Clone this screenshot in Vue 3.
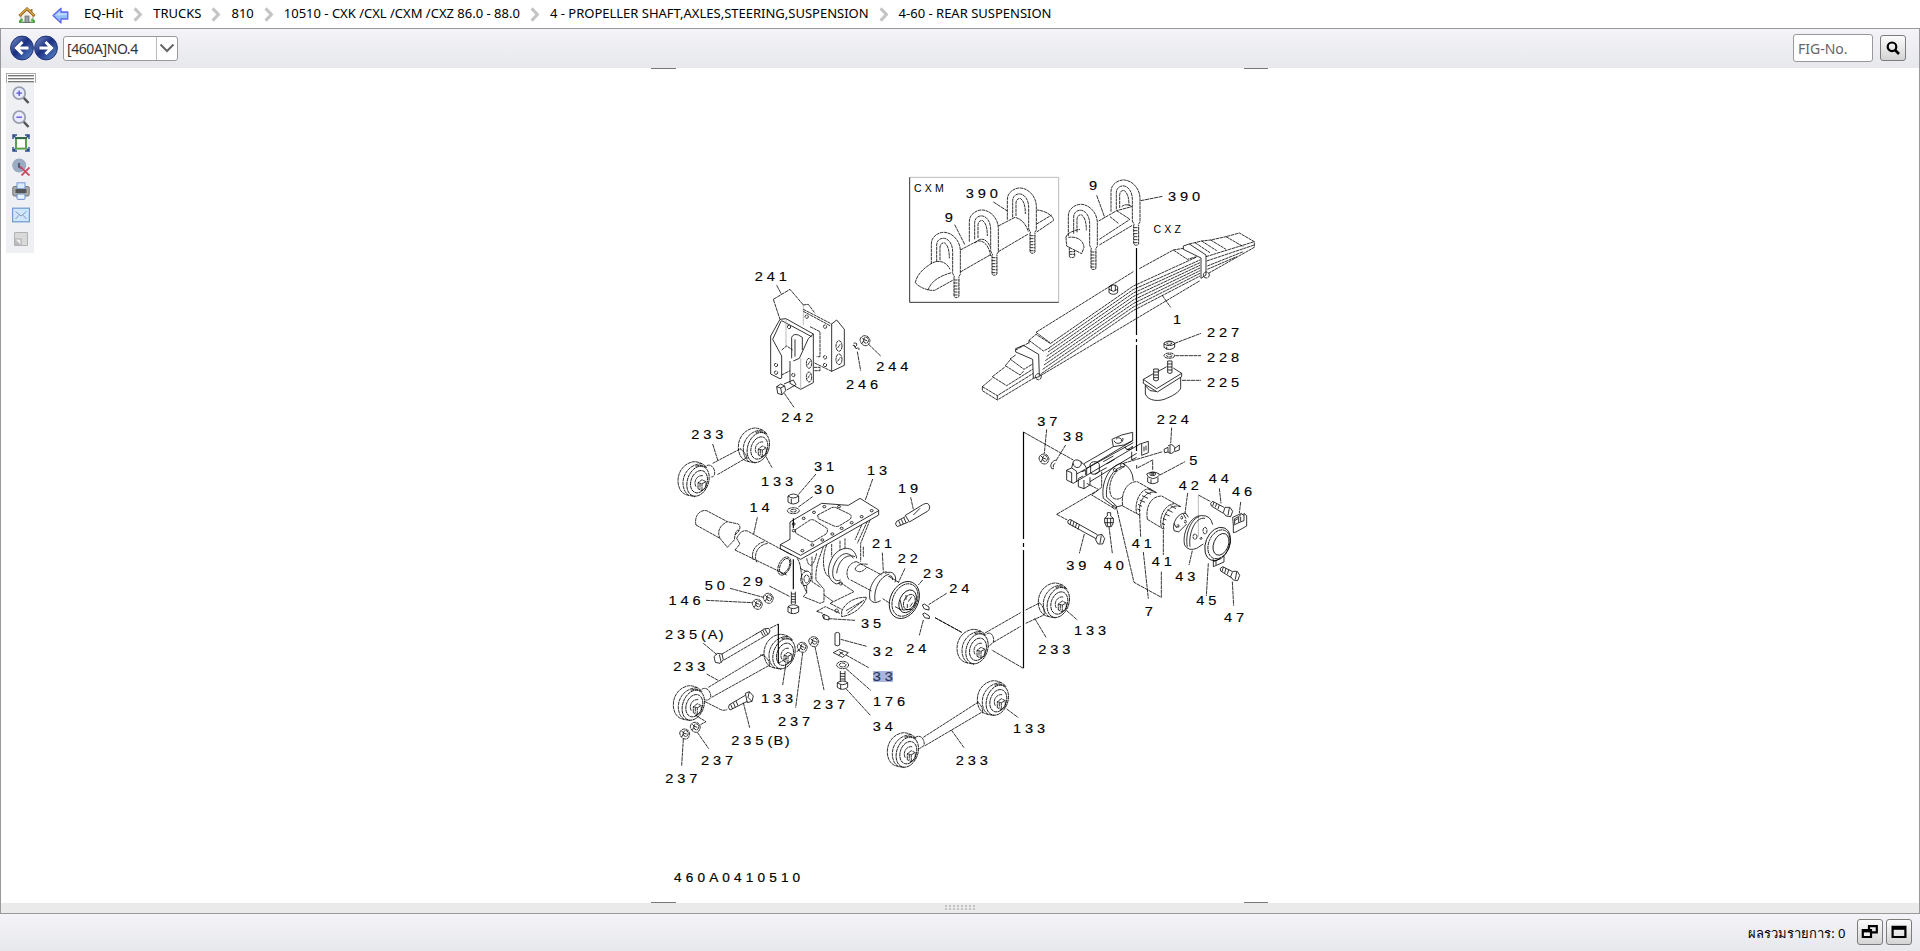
<script setup>
const crumbs = [
  'EQ-Hit',
  'TRUCKS',
  '810',
  '10510 - CXK /CXL /CXM /CXZ 86.0 - 88.0',
  '4 - PROPELLER SHAFT,AXLES,STEERING,SUSPENSION',
  '4-60 - REAR SUSPENSION',
]

// Part call-outs: text, left edge, baseline
const labels = [
  ['390', 965.7, 197.7], ['9', 944.7, 222], ['9', 1089, 190], ['390', 1168, 200.7],
  ['1', 1173, 323.7], ['227', 1207, 337.3], ['228', 1207, 362.3], ['225', 1207, 387.3],
  ['241', 754.7, 281], ['244', 876.3, 371.3], ['246', 846, 388.7], ['242', 781.3, 422],
  ['133', 761, 485.7], ['31', 814, 471.3], ['13', 867, 475], ['30', 814, 494],
  ['19', 898, 493], ['14', 749.5, 512], ['233', 691.3, 439], ['21', 872, 548.3],
  ['22', 897.7, 563.3], ['23', 923, 578], ['24', 949.3, 593], ['29', 742.7, 586],
  ['50', 704.7, 590], ['146', 668.5, 605.3], ['35', 861, 628],
  ['235', 665, 639.3], ['(', 701, 639.3], ['A', 707.8, 639.3], [')', 718.7, 639.3],
  ['24', 906.3, 653], ['32', 872.7, 656], ['176', 873, 705.7], ['34', 872.7, 730.7],
  ['233', 673.3, 670.7], ['133', 761, 702.7], ['237', 813, 708.7], ['237', 778, 725.7],
  ['235', 731.3, 745], ['(', 767.6, 745], ['B', 773.6, 745], [')', 784.7, 745],
  ['237', 701, 765.3], ['237', 665.3, 782.7],
  ['37', 1037.3, 425.7], ['38', 1063, 440.7], ['224', 1156.7, 424], ['5', 1189.3, 464.7],
  ['42', 1178.7, 489.7], ['44', 1208.7, 482.7], ['46', 1232, 496.3], ['39', 1066.3, 570],
  ['40', 1103.7, 570], ['41', 1131.7, 547.7], ['41', 1151.7, 566], ['43', 1175.3, 581.3],
  ['7', 1144.7, 616], ['45', 1196.3, 604.7], ['47', 1224, 622],
  ['133', 1074, 634.7], ['233', 1038.3, 654], ['133', 1013, 733], ['233', 955.7, 765],
]

const ubolts = [[94, 217], [208, 150], [322, 84], [505, 133], [633, 60]]
const eyes = [
  [678, 461.7], [738.3, 428], [764, 634.3], [673.3, 685.7],
  [957, 629.3], [1038.3, 583], [977.3, 680.7], [887.3, 732.7],
]
const nuts = [
  [757.3, 604.3], [768.3, 598.3], [802.3, 647.3], [813.7, 641.7],
  [695.3, 727.3], [684.7, 734], [865, 340.7], [1044, 459],
]
const plateHoles = [
  [461, 372], [461, 392], [491, 355], [522, 337], [553, 320], [597, 320], [695, 332],
  [665, 350], [635, 368], [605, 385], [577, 402], [547, 420], [517, 435], [487, 452],
]
const leaves = [0, 1, 2, 3, 4, 5, 6, 7].map(
  (i) => `M${452 - i * 4} ${550 + i * 13}L700 ${378 + i * 10.5}L${i ? 900 : 888} ${292 + i * 8}`
)
</script>

<template>
  <div class="page">
    <nav class="crumbs">
      <svg class="home" width="18" height="17" viewBox="0 0 18 17">
        <rect x="1" y="13" width="16" height="3" rx="1" fill="#3f9b3c" />
        <path d="M3 8L9 3L15 8V15H3Z" fill="#f3efe6" stroke="#8d8c86" stroke-width=".8" />
        <path d="M12.5 2h2v4h-2z" fill="#a87b46" />
        <path d="M1.3 9L9 1.8L16.7 9" fill="none" stroke="#8a5a17" stroke-width="2.6" />
        <path d="M1.6 8.4L9 1.6L16.4 8.4" fill="none" stroke="#e0a94c" stroke-width="1.3" />
        <rect x="7" y="9" width="4" height="6.5" fill="#9aa0a4" stroke="#5e6468" stroke-width=".7" />
        <circle cx="3.5" cy="13" r="1.5" fill="#4db848" /><circle cx="14.5" cy="13" r="1.5" fill="#4db848" />
      </svg>
      <svg class="back" width="17" height="17" viewBox="0 0 17 17">
        <path d="M1 8.5L9 1.2V5H15.8V12H9V16Z" fill="#93bffa" stroke="#6165ee" stroke-width="1.3" stroke-linejoin="round" />
        <path d="M3.5 8.4L8 4.4V6.4H14.5V8Z" fill="#c6dfff" />
      </svg>
      <template v-for="(c, i) in crumbs" :key="c">
        <svg v-if="i" class="sep" width="10" height="15" viewBox="0 0 10 15">
          <path d="M1.6 1.4L7.4 7.5L1.6 13.6" fill="none" stroke="#c4c4c4" stroke-width="3" />
        </svg>
        <span class="crumb">{{ c }}</span>
      </template>
    </nav>

    <section class="frame">
      <header class="bar">
        <svg class="round" width="24" height="26" viewBox="0 0 24 26">
          <defs>
            <linearGradient id="ball" x1="0" y1="0" x2="1" y2="1">
              <stop offset="0" stop-color="#7f9bd0" /><stop offset=".45" stop-color="#1c2f80" /><stop offset="1" stop-color="#5f8fd2" />
            </linearGradient>
          </defs>
          <ellipse cx="12" cy="13" rx="11.4" ry="11.9" fill="url(#ball)" stroke="#1d3277" />
          <path d="M18.5 13H7M12.5 7L6.5 13L12.5 19" fill="none" stroke="#fff" stroke-width="3" />
        </svg>
        <svg class="round" width="24" height="26" viewBox="0 0 24 26">
          <ellipse cx="12" cy="13" rx="11.4" ry="11.9" fill="url(#ball)" stroke="#1d3277" />
          <path d="M5.5 13H17M11.5 7L17.5 13L11.5 19" fill="none" stroke="#fff" stroke-width="3" />
        </svg>
        <div class="combo">
          <span class="combo-text">[460A]NO.4</span>
          <span class="combo-btn">
            <svg width="16" height="10" viewBox="0 0 16 10"><path d="M1.5 1.5L8 8L14.5 1.5" fill="none" stroke="#666" stroke-width="2" /></svg>
          </span>
        </div>
        <div class="fig">FIG-No.</div>
        <div class="btn search">
          <svg width="14" height="14" viewBox="0 0 14 14"><circle cx="6" cy="5.8" r="4.3" fill="none" stroke="#000" stroke-width="2.2" /><path d="M9 9L13 13" stroke="#000" stroke-width="2.6" /></svg>
        </div>
      </header>

      <div class="canvas">
        <svg class="drawing" width="1918" height="835" viewBox="1 68 1918 835">
          <defs>
            <g id="eye">
              <path d="M28 5C24 1 19 0 16 0C7 1 0 9 0 19C0 26 3 31 8 33L17 35" />
              <path d="M24 2C13 2 5 11 5 21C5 27 7 31 11 34M29 6C24 3 20 3 17 5" />
              <ellipse cx="20" cy="19.5" rx="10.5" ry="15.5" transform="rotate(20 20 19.5)" />
              <ellipse cx="21" cy="20" rx="8" ry="11.5" transform="rotate(20 21 20)" />
              <path d="M18 25C15 20 19 13 25 14M20 27V21L24 18L28 20V26L24 29ZM24 29V22M20 21L24 22L28 20M22 22V27" />
            </g>
            <g id="ubolt">
              <path d="M0 95V35C0 12 22 -1 40 0C66 2 87 28 87 55V126L81 135M16 88V38C16 24 28 16 40 18C55 22 64 38 64 58V123L70 135M26 84V44C27 34 34 30 40 32C52 40 54 60 54 78" />
              <path class="solid" d="M68 135V192Q75 200 83 192V135M68 143h14M68 152h14M68 161h14M68 170h14M68 179h14M68 188h14" />
            </g>
            <g id="nut">
              <path class="solid" d="M-5 -1Q-4 -5 0 -5Q4 -5 5 0Q4 5 1 5Q-4 5 -5 -1ZM-3 3L-1 -1L-3 -3M-1 -1L2 0" />
              <ellipse class="solid" cx="1" cy="-.5" rx="2.5" ry="3" />
            </g>
          </defs>

          <!-- sheet trim marks -->
          <path class="trim" d="M651 68.5H676M1244 68.5H1268M651 902.5H676M1244 902.5H1268" />

          <g class="ink">
            <use v-for="(p, i) in eyes" :key="'e' + i" href="#eye" :x="p[0]" :y="p[1]" />
            <use v-for="(p, i) in nuts" :key="'n' + i" href="#nut" :x="p[0]" :y="p[1]" />
          </g>

          <!-- long assembly lines -->
          <path class="axis" d="M1136.5 248V335M1136.5 339V342M1136.5 345V451M1023.5 432V539M1023.5 543V547M1023.5 550V668" />

          <!-- leaf spring and U-bolts -->
          <g class="ink x3" transform="translate(900 160) scale(.33333)">
            <path class="faint" d="M29 52H476V427" />
            <path class="solid" d="M29 52V427H476" />
            <use v-for="(p, i) in ubolts" :key="i" href="#ubolt" :x="p[0]" :y="p[1]" />
            <path d="M46 368C50 345 70 325 95 310C115 298 140 305 150 328M46 368Q60 385 92 391L104 391L158 361M84 391C90 370 110 350 155 338" />
            <path d="M181 336L270 285M181 270L232 243C255 240 268 262 272 288M295 275L385 222M295 198L345 172C370 178 380 200 385 215M410 216L460 182C464 172 440 152 411 150M410 192L455 165M225 250C240 230 260 235 270 260" />
            <path d="M498 232C500 222 515 212 540 208M498 232L500 258L545 281L552 262C550 240 530 228 505 232M596 183L650 152L695 140M598 238L690 178M598 255L697 196M630 170L655 190M650 152L690 178M665 140C675 130 690 135 695 140M508 262V290Q516 296 524 290V270M508 275h16M508 283h16" />
            <path class="lead" d="M164 194L195 255M280 126L322 153M590 106L614 172M722 122L788 109M786 405L812 442M824 550L903 520M826 587H903M846 661H903" />
            <path d="M408 517L700 335M718 326L820 270L850 265M820 270L862 298L890 290M408 517L450 548M387 541L408 523L452 551M387 541L430 573L450 563M387 541V550M347 570L387 548" />
            <path v-for="d in leaves" :key="d" :d="d" />
            <path class="solid" d="M347 576L347 566L370 556L416 583L418 650L400 655L398 598ZM850 268L850 258L868 252L918 285L918 345L903 355L903 294Z" />
            <circle cx="415" cy="650" r="9" /><circle cx="919" cy="345" r="9" />
            <path d="M330 597L347 585M330 597L372 628L398 612M316 617L330 600M316 617L360 645L372 632M277 650L316 620M277 650L320 677L398 628M247 680L277 655M247 680L292 707L400 640M247 680V692L292 720L400 655M292 707V720M420 648L900 362" />
            <path d="M868 252L905 243L932 240L978 230L1018 219L1063 245V262L925 340M885 248L930 278M905 243L950 272M932 240L978 268M978 230L1030 260M918 290L1063 245M920 303L1063 255M922 318L1030 275M922 328L1010 290" />
            <path class="solid" d="M627 380V398Q640 408 653 398V380Q640 370 627 380ZM634 374V392M646 374V392M627 388L640 394L653 388" />
            <path class="solid" d="M792 549V562Q808 575 824 562V549Q808 537 792 549ZM792 552Q808 562 824 552M800 560V568" />
            <ellipse cx="808" cy="549" rx="8" ry="4" />
            <ellipse cx="808" cy="587" rx="16" ry="8" /><ellipse cx="808" cy="587" rx="8" ry="4" />
            <path class="solid" d="M803 603V638Q810 643 816 638V603ZM803 612h13M803 621h13M803 630h13M761 627V660Q768 666 775 660V627ZM761 636h13M761 645h13M761 653h13" />
            <path class="solid" d="M760 641L730 658L770 686L845 640L820 624M730 658V670L772 696L845 650V640M800 620L775 634M736 675V702C745 725 780 725 800 715C825 705 845 690 842 680V652M737 678L750 692L768 694" />
          </g>

          <!-- bracket 241 -->
          <g class="ink x3" transform="translate(740 250) scale(.33333)">
            <path class="lead" d="M110 106L124 132M100 148L150 118L190 165M100 148L120 208M133 430L162 472M352 305L362 362M385 282L422 318" />
            <path class="solid" d="M120 208L138 206L220 252V398L182 418L150 400V333M120 208L92 258V372L120 386L125 384V318L98 268L124 212M125 212L215 260M220 252L205 266L178 325L160 333M155 325V262Q160 250 175 255L187 262V300M165 268V320" />
            <path class="faint" d="M138 206V290M182 418V325M190 225V165" />
            <path d="M125 300L140 288L158 300M125 375L150 362M190 165L205 163L225 190M190 178L275 222M190 184L272 228M210 230L240 245V320H230M275 364L222 338M222 352H240V362H222" />
            <path class="solid" d="M275 222L290 210L313 238V346L275 364ZM132 402L160 390M140 420L168 404M160 390L168 404" />
            <ellipse cx="207" cy="340" rx="8" ry="15" /><ellipse cx="207" cy="381" rx="8" ry="15" />
            <ellipse cx="297" cy="288" rx="9" ry="16" /><ellipse cx="297" cy="328" rx="9" ry="16" />
            <path d="M203 345l8 -12M203 385l8 -12M293 294l8 -12M293 334l8 -12" />
            <circle cx="147" cy="231" r="5" /><circle cx="108" cy="345" r="5" /><circle cx="108" cy="368" r="5" /><circle cx="160" cy="375" r="5" />
            <circle cx="200" cy="200" r="5" /><circle cx="255" cy="230" r="5" /><circle cx="255" cy="322" r="5" /><circle cx="255" cy="345" r="5" />
            <path class="solid" d="M110 410L122 402L134 408L137 422L126 434L113 430ZM110 410L122 414L134 408M122 414L126 434" />
            <path class="solid" d="M341 280Q352 276 350 286Q342 290 348 296Q358 290 357 300M338 286Q346 284 344 292" />
          </g>

          <!-- axle housing group -->
          <g class="ink x3" transform="translate(640 400) scale(.33333)">
            <path d="M218 190L302 146M232 224L322 172M200 197C212 190 226 205 224 222Q220 234 212 230M300 146Q318 158 322 176" />
            <path class="lead" d="M218 132L233 180M378 170L396 203M528 222L474 285M518 290L474 322M388 558L450 590M352 352L341 402M698 237L676 300M812 292L820 328M727 458L730 515M795 505L775 548M848 540L835 555M920 580L866 614M850 660L838 706M566 656L645 661M270 565L370 592M198 601L336 608" />
            <path class="solid" d="M444 288V306Q460 318 476 306V288Q460 276 444 288Q460 300 476 288M454 296V310" />
            <ellipse cx="460" cy="332" rx="18" ry="9" /><ellipse cx="460" cy="332" rx="9" ry="4" />
            <path class="axisx" d="M460 355V385M460 478V568" />
            <path class="solid" d="M454 575V612M466 575V612M454 582h12M454 590h12M454 598h12M454 606h12M444 620V636Q460 646 476 636V620Q460 608 444 620Q460 632 476 620M454 626V640" />
            <path d="M168 375C162 350 178 328 200 332L262 365M168 375L240 415L262 442L283 420L285 405C298 395 305 380 295 372L262 365C240 375 230 395 240 415M285 405Q290 385 298 392" />
            <path d="M290 415C300 395 310 390 322 393L455 465M285 450L440 525M285 450L300 432L290 415M383 430C352 435 340 465 350 487M373 425C342 432 332 462 340 480" />
            <ellipse cx="433" cy="498" rx="17" ry="29" transform="rotate(25 433 498)" /><ellipse cx="434" cy="498" rx="13" ry="24" transform="rotate(25 434 498)" />
            <path class="solid" d="M450 385V418L421 434V446L482 478L716 345V330L660 295L625 316L545 310L450 366V385M421 434L482 466L716 332" />
            <path d="M465 390L510 360Q517 357 525 362L560 384Q566 392 558 402L522 424Q515 428 507 422L468 400ZM533 345L575 323Q582 320 590 324L630 343Q637 350 630 358L597 378Q590 381 582 378L535 356Z" />
            <ellipse v-for="(p, i) in plateHoles" :key="i" :cx="p[0]" :cy="p[1]" rx="4.5" ry="3.5" class="solid" />
            <path d="M472 475C488 500 480 530 492 560L500 578L490 590L540 610M500 475C505 505 520 505 530 460M550 440C540 470 525 500 528 540L552 568V605L540 610M516 470V545L542 562M480 505L500 515M690 360L662 430V485M682 364L652 430M665 375L645 420M600 422V450M615 415V445M575 432V470M670 440V470M560 435C545 470 548 520 566 530M500 578V555" />
            <path class="solid" d="M650 475C645 438 605 435 580 468C560 500 558 540 590 552L602 548M640 475C622 446 592 465 580 502C574 530 582 548 602 540M590 520C595 480 620 460 645 470" />
            <path d="M602 548L642 575L570 610M552 585L580 605M570 610L605 628M530 634L556 620L600 640M605 635C615 605 650 590 680 592C670 620 640 645 605 650ZM618 632L668 603M622 640L672 600M530 634L548 640" />
            <circle cx="602" cy="550" r="5" /><circle cx="590" cy="632" r="5" />
            <ellipse cx="498" cy="535" rx="15" ry="22" transform="rotate(15 498 535)" /><ellipse cx="500" cy="537" rx="8" ry="12" />
            <path class="solid" d="M547 646L552 643L567 650V660L552 657ZM552 643V657" />
            <path d="M650 485L725 525M632 540L695 573M650 485C625 487 612 520 628 540M645 508Q652 488 683 493M645 508Q660 525 680 502" />
            <path class="solid" d="M740 515C710 520 682 560 690 598Q700 615 722 602M748 522C720 530 700 565 705 604M735 520C760 508 772 530 765 547M745 530Q757 522 758 540" />
            <path d="M748 530L778 548M728 596L750 610" />
            <ellipse cx="793" cy="600" rx="42" ry="58" transform="rotate(25 793 600)" class="solid" /><ellipse cx="795" cy="600" rx="36" ry="51" transform="rotate(25 795 600)" />
            <ellipse cx="803" cy="604" rx="24" ry="36" transform="rotate(25 803 604)" class="solid" /><ellipse cx="808" cy="606" rx="16" ry="24" transform="rotate(25 808 606)" />
            <path class="solid" d="M780 600L788 630L815 628M798 585V600M815 590L805 605M802 612V624M818 608L810 620M765 620L785 630" />
            <path class="solid" d="M847 615L853 612L867 621V630L853 627ZM848 642L854 639L868 648V656L854 653Z" />
            <path class="lead" d="M885 653L965 697" />
            <path d="M850 313Q866 305 869 320Q870 330 862 334L808 366L796 346ZM796 350L770 364Q762 372 772 380L805 366M820 345L840 325M776 362l6 14M784 358l6 14M792 354l6 14" class="solid" />
          </g>

          <!-- torque rods, left -->
          <g class="ink x3" transform="translate(640 600) scale(.33333)">
            <path d="M205 262L372 162M215 292L388 196M185 268C200 258 214 275 212 292Q208 302 196 300M360 165C378 165 392 185 388 200" />
            <path class="solid" d="M222 170L232 160L246 162L250 180L240 190L226 187ZM238 164L244 188M346 103L362 94Q370 84 386 85Q394 92 386 102L370 111M362 94l8 14M368 90l8 15M375 87l8 15" />
            <path d="M246 162L350 101M252 180L372 110" />
            <path class="axisx" d="M415 72V190" />
            <path d="M390 85L415 72M415 190L440 175M470 155L478 150M165 345L198 365L180 375M195 305L235 325Q250 335 262 328" />
            <path class="lead" d="M190 130L232 165M200 222L236 242M438 190L428 255M488 158L467 323M525 140L552 270M310 308L329 383M172 397L206 446M130 417L125 497M602 118L680 139M618 165L686 203M618 206L692 271M618 266L692 347" />
            <path class="solid" d="M316 286L268 314Q262 322 270 330L322 304M272 313l6 14M280 308l6 14M288 303l6 14M316 280L328 275L340 288L336 304L322 308ZM328 275L324 292L336 304" />
            <path class="solid" d="M585 100V135Q592 140 599 135V100Q592 94 585 100ZM580 158L598 148L625 158L608 172ZM598 155L612 165M610 155L596 165" />
            <ellipse cx="608" cy="195" rx="18" ry="11" /><ellipse cx="608" cy="195" rx="10" ry="6" />
            <path class="solid" d="M601 213V244M615 213V244M601 221h14M601 229h14M601 237h14M592 248V262Q608 274 623 262V248Q608 238 592 248Q608 260 623 248M602 254V268" />
          </g>

          <!-- torque rods, centre -->
          <g class="ink x3" transform="translate(860 560) scale(.33333)">
            <path d="M375 219L482 158M497 150L540 128M400 247L482 199M497 190L552 165M380 222C394 212 404 232 400 247L385 260M538 128Q556 145 552 165" />
            <path d="M190 532L357 425M195 557L368 455M165 533C182 520 196 540 192 557L178 566M352 425Q370 440 368 460" />
            <path class="lead" d="M490 325L395 270M524 175L558 232M620 152L652 180M274 510L312 563M440 447L475 473" />
            <path class="lead" d="M225 173L305 217" />
          </g>

          <!-- spring seat and bearing group -->
          <g class="ink x3" transform="translate(940 400) scale(.33333)">
            <path class="lead" d="M250 96L400 180M320 88L313 160M377 135L348 182M695 83L692 130M660 225L735 185M743 279L735 340M838 265L843 310M902 306L898 340M877 545L881 617M805 490L799 588M757 452L747 495M599 345L602 410M610 456L625 596M670 390V465M664 515V592L582 547L530 325M507 380L517 460M433 402L418 460M350 343L475 270M350 343L382 360" />
            <path class="lead" d="M550 190L668 155M590 195V205L638 180V210M775 285L812 305" />
            <path class="faint" d="M775 285V410" />
            <path class="solid" d="M350 182C346 178 334 184 332 198Q334 210 342 206M346 190Q338 192 340 202" />
            <path class="solid" d="M380 210L395 204L400 184Q412 172 430 192L520 140L516 118L545 105L578 97V122L440 205M380 210V240L400 250L440 226M395 204L410 214V246M380 212L395 218V248M415 238V260L432 266L450 255V232M432 240V266M410 222L580 128M440 226L600 132L625 124V158L605 166V132M450 245L590 160M432 192L440 205V226M552 135L578 122M520 140L552 135" />
            <path class="solid" d="M400 190a12 12 0 1 0 22 -6M522 122a13 11 0 1 0 26 -8M528 118a8 7 0 1 1 16 6M452 200a14 10 0 1 1 26 -6M452 200v20q14 8 26 -6v-20M555 140a10 9 0 1 0 22 -2M560 150l18 -10M575 155V180L590 172M425 215l12 -4v14M465 222L500 203M415 236l14 -8M490 185l30 -17M500 192l24 -14M612 140v14M618 137v14" />
            <path d="M485 215V262L455 285L522 325M440 250L475 268" />
            <path class="solid" d="M545 190C510 195 482 245 490 295L525 322L548 316M552 200C518 200 495 250 500 292L525 314M548 190Q578 205 580 242" />
            <path d="M545 205C515 215 500 265 515 290Q530 305 548 290" />
            <circle cx="548" cy="196" r="6" /><circle cx="525" cy="210" r="5" /><circle cx="524" cy="321" r="6" />
            <path class="solid" d="M620 222Q638 210 658 222Q658 232 638 236Q620 232 620 222ZM623 232V246Q638 256 654 246V232M633 238V250" /><ellipse class="solid" cx="638" cy="222" rx="9" ry="5" /><ellipse class="solid" cx="638" cy="222" rx="4" ry="2" />
            <path d="M548 316C542 280 560 244 592 245L650 278M548 318L600 346M650 278C618 268 592 305 600 346M632 267C600 262 582 310 590 340M622 358C616 322 632 288 665 288L722 320M622 358L672 388M722 320C690 308 660 350 672 388M704 311C676 312 655 350 664 382" />
            <path class="solid" d="M615 275l18 8M606 287l18 8M599 300l16 7M594 313l12 6M592 327l10 4M626 268l16 6M692 317l16 9M682 329l16 8M675 342l14 6M669 355l10 5M665 370l10 4" />
            <path class="solid" d="M745 352L738 340C715 335 695 370 702 392L716 396L740 372M730 342l8 14M702 370l8 14" />
            <ellipse cx="725" cy="353" rx="3" ry="4" /><ellipse cx="714" cy="378" rx="3" ry="4" /><ellipse cx="736" cy="365" rx="3" ry="4" />
            <path class="solid" d="M785 347C752 345 725 400 734 435Q745 455 770 445L790 432M778 350C755 355 734 400 742 440M785 347Q812 345 818 374M795 355C765 350 745 400 750 440" />
            <ellipse cx="795" cy="392" rx="6" ry="10" /><ellipse cx="765" cy="410" rx="6" ry="8" /><circle cx="783" cy="415" r="3" />
            <ellipse cx="833" cy="432" rx="36" ry="52" transform="rotate(22 833 432)" class="solid" /><ellipse cx="837" cy="433" rx="31" ry="45" transform="rotate(22 837 433)" /><ellipse cx="843" cy="433" rx="22" ry="34" transform="rotate(22 843 433)" class="solid" />
            <path class="solid" d="M820 478V500L852 486V468M828 482V495M820 485L840 476" />
            <path class="solid" d="M852 322L818 304Q808 310 814 318L850 340M822 306l-4 12M830 310l-4 12M838 315l-4 12M855 322L870 322L878 334L872 350L858 348L850 338ZM868 324L864 346" />
            <path class="solid" d="M878 352L880 376V398L888 396L920 378V347L912 340V362L896 368V350L884 356V372M880 376L896 368M896 350L905 342L912 346M884 362L894 356M902 350V364M878 352L905 340" />
            <path class="solid" d="M876 514L848 500Q836 505 842 513L874 533M850 501l-4 14M858 505l-4 14M866 509l-4 14M878 514L892 514L899 526L893 542L880 540L872 530ZM890 516L886 538" />
            <path class="solid" d="M472 404L390 358Q380 362 384 370L468 416M394 360l-4 14M402 365l-4 14M410 369l-4 14M418 374l-4 14M472 406L486 403L494 416L488 432L474 432L467 420ZM484 406L480 430" />
            <path class="solid" d="M502 338H512V348L520 355V368L514 380H500L494 368V355L502 348ZM494 355H520M494 368H520M502 355V378M512 355V378" />
            <path class="solid" d="M672 148L684 142V156L674 158ZM684 138Q696 128 704 142V152Q696 166 684 156M704 145L718 135V150L704 155M690 136V160" />
          </g>

          <rect class="mark" x="873" y="671" width="20" height="11" />
          <text v-for="(l, i) in labels" :key="i" class="tag" :transform="`translate(${l[1]} ${l[2]}) scale(1.17 1)`">{{ l[0] }}</text>
          <text class="tag on" transform="translate(872.7 680.7) scale(1.17 1)">33</text>
          <text class="model" x="914" y="192.3">CXM</text>
          <text class="model" x="1153.5" y="232.7">CXZ</text>
          <text class="code" x="674" y="882">460A0410510</text>
        </svg>

        <aside class="tools">
          <div class="grip"><i></i><i></i><i></i></div>
          <svg class="tool" width="18" height="18" viewBox="0 0 18 18">
            <path d="M11.5 11.5L16.5 17" stroke="#555" stroke-width="2.6" /><circle cx="7.2" cy="7.2" r="6" fill="#e9ecff" stroke="#9aa0ab" stroke-width="1.8" />
            <path d="M4.4 7.2h5.6M7.2 4.4v5.6" stroke="#5a50cf" stroke-width="1.3" />
          </svg>
          <svg class="tool" width="18" height="18" viewBox="0 0 18 18">
            <path d="M11.5 11.5L16.5 17" stroke="#555" stroke-width="2.6" /><circle cx="7.2" cy="7.2" r="6" fill="#e9ecff" stroke="#9aa0ab" stroke-width="1.8" />
            <path d="M4.4 7.2h5.6" stroke="#5a50cf" stroke-width="1.3" />
          </svg>
          <svg class="tool" width="18" height="18" viewBox="0 0 18 18">
            <path d="M1 5V1H5M13 1H17V5M17 13V17H13M5 17H1V13M1 1L4 4M17 1L14 4M17 17L14 14M1 17L4 14" fill="none" stroke="#2c4a8c" stroke-width="1.4" />
            <rect x="4" y="4.2" width="10" height="10.4" fill="#fff" stroke="#58a24d" stroke-width="2" /><path d="M3 4h12" stroke="#285c45" stroke-width="1.6" />
          </svg>
          <svg class="tool" width="18" height="18" viewBox="0 0 18 18">
            <circle cx="7.2" cy="7.5" r="7" fill="#9cabc4" /><path d="M7 5v4L10 10.5" fill="none" stroke="#46546e" stroke-width="1.8" />
            <path d="M9.5 17.5L17.5 9.5M8 8.5L17.5 17.5" stroke="#cc4c66" stroke-width="1.8" />
          </svg>
          <svg class="tool" width="18" height="18" viewBox="0 0 18 18">
            <rect x=".8" y="4.5" width="16.4" height="9.5" rx="1.5" fill="#aaa" stroke="#777" /><rect x="5" y=".8" width="8" height="6" fill="#dcecff" stroke="#7397cf" />
            <path d="M3.5 7h11v4h-11z" fill="#555" /><rect x="5" y="12" width="8" height="5.4" rx="1" fill="#e7f2ff" stroke="#6d8fc7" />
          </svg>
          <svg class="tool" width="18" height="18" viewBox="0 0 18 18">
            <rect x=".6" y="2.2" width="16.8" height="13.6" fill="#cfe6fd" stroke="#6f9ace" stroke-width="1.2" /><path d="M3.5 5.5L9 10L14.5 5.5M3.5 13L7 9.2M14.5 13L11 9.2" fill="none" stroke="#8498b8" />
          </svg>
          <svg class="tool" width="18" height="18" viewBox="0 0 18 18">
            <path d="M2.5 2.5H15.5V15.5H2.5Z" fill="#d9d9d9" stroke="#b2b2b2" /><path d="M3 9H9V15.5" fill="#eee" stroke="#aaa" /><path d="M3 9L9 15H3Z" fill="#bbb" />
          </svg>
        </aside>
      </div>

      <div class="splitter"><span class="dots"><i v-for="n in 16" :key="n"></i></span></div>
    </section>

    <footer class="foot">
      <span class="total">ผลรวมรายการ: 0</span>
      <div class="btn">
        <svg width="18" height="16" viewBox="0 0 18 16"><path d="M8 2.2H15.8V8.4H8Z" fill="none" stroke="#000" stroke-width="2.2" /><path d="M1.8 6.2H10V13H1.8Z" fill="#f2f2f2" stroke="#000" stroke-width="2.2" /><path d="M1 5.2H11V8.4H1Z" /></svg>
      </div>
      <div class="btn">
        <svg width="16" height="14" viewBox="0 0 16 14"><path d="M1.6 1.8H14.4V12H1.6Z" fill="none" stroke="#000" stroke-width="2.2" /><path d="M1 1H15V4.8H1Z" /></svg>
      </div>
    </footer>
  </div>
</template>

<style>
body { margin: 0; background: #fff; overflow: hidden; }
</style>

<style scoped>
.page { display: flex; flex-direction: column; width: 1920px; height: 951px; font-family: "Noto Sans", "Open Sans", sans-serif; background: #fff; color: #000; }
.crumbs { display: flex; align-items: center; height: 28px; box-sizing: border-box; padding-left: 18px; font-size: 13px; }
.home { margin-top: 2px; }
.back { margin: 3px 15.5px 0 15.5px; }
.crumb { white-space: nowrap; line-height: 26px; height: 28px; }
.sep { margin: 0 10px; }
.frame { display: flex; flex-direction: column; height: 886px; box-sizing: border-box; border: 1px solid #999; }
.bar { display: flex; align-items: center; height: 39px; flex: none; box-sizing: border-box; padding: 0 13px 1px 9px; background: linear-gradient(#f3f3f8, #e7e8ec); }
.round + .round { margin-right: 5px; }
.combo { display: flex; width: 115px; height: 25px; box-sizing: border-box; border: 1px solid #999; border-radius: 3px; background: #fff; font-size: 14px; letter-spacing: -.42px; color: #333; }
.combo-text { flex: 1; padding-left: 3px; line-height: 23px; white-space: nowrap; }
.combo-btn { display: flex; align-items: center; justify-content: center; width: 20px; border-left: 1px solid #bbb; }
.fig { width: 80px; height: 28px; box-sizing: border-box; margin-left: auto; border: 1px solid #999; border-radius: 3px; background: #fff; padding-left: 4px; font-size: 14px; line-height: 28px; color: #666; }
.btn { display: flex; align-items: center; justify-content: center; width: 26px; height: 26px; box-sizing: border-box; border: 1px solid #7c7c7c; border-radius: 3px; background: linear-gradient(#fcfcfc, #d4d4d4); }
.search { margin-left: 7px; }
.canvas { position: relative; height: 835px; flex: none; background: #fff; }
.drawing { display: block; }
.tools { position: absolute; left: 5px; top: 5px; width: 30px; height: 180px; display: flex; flex-direction: column; align-items: flex-start; background: linear-gradient(90deg, #eef0f3 28px, transparent 28px); }
.grip { width: 30px; height: 10px; box-sizing: border-box; border: 1px solid #aaa; border-bottom: 0; background: #fff; padding: 1px 1px 0; display: flex; flex-direction: column; gap: 1px; }
.grip i { height: 2px; background: #ccc; border-top: 1px solid #777; box-sizing: border-box; }
.tool { margin: 3px 0 3px 6px; }
.splitter { height: 10px; flex: none; background: #eaeaea; display: flex; justify-content: center; }
.dots { display: grid; grid-template-columns: repeat(8, 2px); grid-auto-rows: 2px; row-gap: 1px; column-gap: 2.1px; margin-top: 2px; }
.dots i { background: #c2c2c2; }
.foot { display: flex; align-items: center; justify-content: flex-end; height: 37px; box-sizing: border-box; padding: 0 8px 1px 0; gap: 3px; background: linear-gradient(#f3f3f8, #e7e8ec); font-size: 13px; }
.total { margin-right: 8.5px; white-space: nowrap; padding-top: 3px; }

.ink { fill: none; stroke: #000; stroke-width: .8; stroke-dasharray: 3.6 .5; }
.ink.x3 { stroke-width: 2.4; stroke-dasharray: 10 1.6; }
.ink .solid { stroke-dasharray: none; stroke-width: inherit; }
.ink .faint { stroke: #aaa; stroke-dasharray: none; }
.ink .lead { stroke-dasharray: 12 1.6; }
.ink .axisx { stroke-width: 3.4; stroke-dasharray: none; }
.axis { fill: none; stroke: #000; stroke-width: 1.2; }
.trim { stroke: #777; stroke-width: 1; }
.tag { font: 12.5px "Liberation Sans", Arial, sans-serif; letter-spacing: 3.3px; fill: #000; stroke: #000; stroke-width: .12; }
.tag.on { fill: #26335f; stroke: #26335f; }
.mark { fill: #a9b5de; }
.model { font: 10.5px "Liberation Sans", Arial, sans-serif; letter-spacing: 3.2px; }
.code { font: 13.6px "Liberation Sans", Arial, sans-serif; letter-spacing: 4.15px; stroke: #000; stroke-width: .2; }
</style>
